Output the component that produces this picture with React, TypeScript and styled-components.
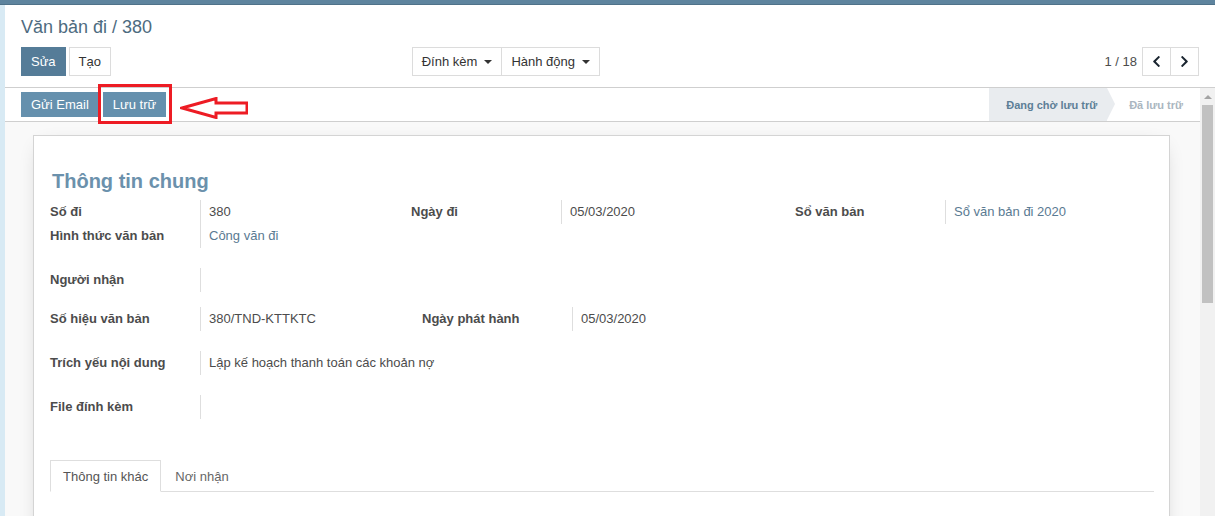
import React from 'react';
import styled, { createGlobalStyle } from 'styled-components';
import { FaChevronLeft, FaChevronRight } from 'react-icons/fa';

const GlobalStyle = createGlobalStyle`
    html, body {
        margin: 0;
        padding: 0;
        background: #fff;
        overflow: hidden;
    }
    body {
        font-family: "Liberation Sans", Arial, sans-serif;
        font-size: 13px;
        color: #4c4c4c;
    }
`;

const Page = styled.div`
    width: 1215px;
    height: 516px;
    display: flex;
    flex-direction: column;
`;

const TopBar = styled.div`
    height: 5px;
    flex: none;
    background: #5e849e;
    border-bottom: 1px solid #4f7289;
    box-sizing: border-box;
`;

const Body = styled.div`
    flex: 1;
    display: flex;
    min-height: 0;
`;

const LeftStrip = styled.div`
    width: 5px;
    flex: none;
    background: #d8eaf4;
`;

const Main = styled.div`
    position: relative;
    flex: 1;
    display: flex;
    flex-direction: column;
    min-width: 0;
`;

const ControlPanel = styled.div`
    flex: none;
    height: 83px;
    box-sizing: border-box;
    padding: 10px 16px 0 16px;
    border-bottom: 1px solid #cfcfcf;
    background: #fff;
`;

const Breadcrumb = styled.div`
    font-size: 18px;
    line-height: 24px;
    color: #4d6b80;
    height: 32px;
`;

const ButtonsRow = styled.div`
    display: flex;
    align-items: center;
`;

const CpLeft = styled.div`
    width: 50%;
    display: flex;
    align-items: center;
    justify-content: space-between;
    padding-right: 10px;
    box-sizing: border-box;
`;

const CpRight = styled.div`
    width: 50%;
    display: flex;
    align-items: center;
    justify-content: flex-end;
`;

const Group = styled.div<{ $gap?: number }>`
    display: flex;
    gap: ${p => p.$gap ?? 0}px;
`;

const Btn = styled.button<{ $primary?: boolean }>`
    height: 29px;
    padding: 0 9px;
    font-family: inherit;
    font-size: 13px;
    border: 1px solid ${p => (p.$primary ? '#557c98' : '#dcdcdc')};
    background: ${p => (p.$primary ? '#557c98' : '#fff')};
    color: ${p => (p.$primary ? '#fff' : '#333')};
    display: flex;
    align-items: center;
    gap: 7px;
    cursor: pointer;
    & + & {
        margin-left: -1px;
    }
`;

const Caret = styled.span`
    display: inline-block;
    border-top: 4px solid #333;
    border-left: 4px solid transparent;
    border-right: 4px solid transparent;
    margin-top: 1px;
`;

const PagerValue = styled.span`
    color: #4c4c4c;
    margin-right: 5px;
`;

const PagerBtn = styled.button`
    width: 29px;
    height: 29px;
    border: 1px solid #dcdcdc;
    background: #fff;
    color: #1a2530;
    display: flex;
    align-items: center;
    justify-content: center;
    font-size: 13px;
    padding: 0;
    & + & {
        margin-left: -1px;
    }
`;

const FormArea = styled.div`
    flex: 1;
    display: flex;
    min-height: 0;
`;

const FormContent = styled.div`
    flex: 1;
    overflow: hidden;
    background: #f9f9f9;
`;

const ScrollTrack = styled.div`
    width: 15px;
    flex: none;
    background: #f1f1f1;
    display: flex;
    flex-direction: column;
    align-items: center;
`;

const ScrollUp = styled.div`
    height: 17px;
    flex: none;
    display: flex;
    align-items: center;
    justify-content: center;
    &::before {
        content: '';
        border-bottom: 4px solid #a3a3a3;
        border-left: 4px solid transparent;
        border-right: 4px solid transparent;
    }
`;

const ScrollThumb = styled.div`
    width: 11px;
    height: 198px;
    background: #c1c1c1;
`;

const StatusBar = styled.div`
    height: 34px;
    box-sizing: border-box;
    background: #fff;
    border-bottom: 1px solid #cfcfcf;
    display: flex;
    justify-content: space-between;
    padding-left: 16px;
`;

const StatusButtons = styled.div`
    display: flex;
    align-items: center;
    gap: 4px;
`;

const StatusBtn = styled.button`
    height: 25px;
    padding: 0 10px;
    border: none;
    background: #6590ad;
    color: #fff;
    font-family: inherit;
    font-size: 13px;
`;

const Highlight = styled.div`
    position: absolute;
    left: 93px;
    top: 79px;
    width: 74px;
    height: 40px;
    box-sizing: border-box;
    border: 3px solid #ed1c24;
    pointer-events: none;
`;

const Arrow = styled.svg`
    position: absolute;
    left: 175px;
    top: 92px;
    pointer-events: none;
`;

const Stages = styled.div`
    display: flex;
    align-items: stretch;
`;

const Stage = styled.div<{ $active?: boolean }>`
    position: relative;
    display: flex;
    align-items: center;
    padding: 0 ${p => (p.$active ? 10 : 17)}px 0 ${p => (p.$active ? 17 : 22)}px;
    font-size: 11px;
    font-weight: bold;
    background: ${p => (p.$active ? '#e9ecef' : '#fff')};
    color: ${p => (p.$active ? '#5d7f97' : '#aab6c0')};
    ${p =>
        p.$active &&
        `
        &::after {
            content: '';
            position: absolute;
            right: -8px;
            top: 0;
            border-top: 16.5px solid transparent;
            border-bottom: 16.5px solid transparent;
            border-left: 8px solid #e9ecef;
            z-index: 1;
        }
    `}
`;

const Sheet = styled.div`
    margin: 13px 30px 40px 28px;
    background: #fff;
    border: 1px solid #d4d4d4;
    box-shadow: 0 5px 20px -10px rgba(0, 0, 0, 0.3);
    padding: 30px 15px 0 16px;
    min-height: 760px;
`;

const Title = styled.h1`
    margin: 0 0 4px 2px;
    font-size: 20px;
    line-height: 30px;
    font-weight: bold;
    color: #6b91ac;
`;

const Row = styled.div<{ $top?: number }>`
    display: flex;
    margin-top: ${p => p.$top ?? 0}px;
`;

const Label = styled.div`
    width: 150px;
    flex: none;
    height: 24px;
    line-height: 24px;
    font-weight: bold;
    color: #4c4c4c;
    white-space: nowrap;
`;

const Value = styled.div<{ $w?: number; $link?: boolean }>`
    ${p => (p.$w ? `width: ${p.$w}px; flex: none;` : 'flex: 1;')}
    box-sizing: border-box;
    height: 24px;
    line-height: 24px;
    border-left: 1px solid #dedede;
    padding-left: 8px;
    color: ${p => (p.$link ? '#5a7a92' : '#4c4c4c')};
    white-space: nowrap;
`;

const Tabs = styled.div`
    margin-top: 41px;
    display: flex;
    border-bottom: 1px solid #dedede;
`;

const Tab = styled.div<{ $active?: boolean }>`
    height: 32px;
    box-sizing: border-box;
    margin-bottom: -1px;
    padding: 0 12px;
    line-height: 31px;
    color: ${p => (p.$active ? '#555' : '#666')};
    border: 1px solid ${p => (p.$active ? '#dedede' : 'transparent')};
    border-bottom-color: ${p => (p.$active ? '#fff' : 'transparent')};
    background: ${p => (p.$active ? '#fff' : 'transparent')};
    & + & {
        margin-left: 1px;
    }
`;

type FieldProps = { label: string; value?: string; w?: number; link?: boolean };

const Field = ({ label, value, w, link }: FieldProps) => (
    <>
        <Label>{label}</Label>
        <Value $w={w} $link={link}>{value}</Value>
    </>
);

const App = () => (
    <Page>
        <GlobalStyle />
        <TopBar />
        <Body>
            <LeftStrip />
            <Main>
                <ControlPanel>
                    <Breadcrumb>Văn bản đi / 380</Breadcrumb>
                    <ButtonsRow>
                        <CpLeft>
                            <Group $gap={4}>
                                <Btn $primary>Sửa</Btn>
                                <Btn>Tạo</Btn>
                            </Group>
                            <Group>
                                <Btn>Đính kèm <Caret /></Btn>
                                <Btn>Hành động <Caret /></Btn>
                            </Group>
                        </CpLeft>
                        <CpRight>
                            <PagerValue>1 / 18</PagerValue>
                            <PagerBtn><FaChevronLeft /></PagerBtn>
                            <PagerBtn><FaChevronRight /></PagerBtn>
                        </CpRight>
                    </ButtonsRow>
                </ControlPanel>
                <FormArea>
                    <FormContent>
                        <StatusBar>
                            <StatusButtons>
                                <StatusBtn>Gửi Email</StatusBtn>
                                <StatusBtn>Lưu trữ</StatusBtn>
                            </StatusButtons>
                            <Stages>
                                <Stage $active>Đang chờ lưu trữ</Stage>
                                <Stage>Đã lưu trữ</Stage>
                            </Stages>
                        </StatusBar>
                        <Sheet>
                            <Title>Thông tin chung</Title>
                            <Row>
                                <Field label="Số đi" value="380" w={211} />
                                <Field label="Ngày đi" value="05/03/2020" w={234} />
                                <Field label="Sổ văn bản" value="Sổ văn bản đi 2020" link />
                            </Row>
                            <Row>
                                <Field label="Hình thức văn bản" value="Công văn đi" link />
                            </Row>
                            <Row $top={20}>
                                <Field label="Người nhận" />
                            </Row>
                            <Row $top={15}>
                                <Field label="Số hiệu văn bản" value="380/TND-KTTKTC" w={222} />
                                <Field label="Ngày phát hành" value="05/03/2020" />
                            </Row>
                            <Row $top={20}>
                                <Field label="Trích yếu nội dung" value="Lập kế hoạch thanh toán các khoản nợ" />
                            </Row>
                            <Row $top={20}>
                                <Field label="File đính kèm" />
                            </Row>
                            <Tabs>
                                <Tab $active>Thông tin khác</Tab>
                                <Tab>Nơi nhận</Tab>
                            </Tabs>
                        </Sheet>
                    </FormContent>
                    <ScrollTrack>
                        <ScrollUp />
                        <ScrollThumb />
                    </ScrollTrack>
                </FormArea>
                <Highlight />
                <Arrow width="68" height="22" viewBox="0 0 68 22">
                    <polygon
                        points="2,11 36,1.5 36,6 67,6 67,16 36,16 36,20.5"
                        fill="#fff"
                        stroke="#ed1c24"
                        strokeWidth="3"
                        strokeLinejoin="miter"
                    />
                </Arrow>
            </Main>
        </Body>
    </Page>
);

export default App;
